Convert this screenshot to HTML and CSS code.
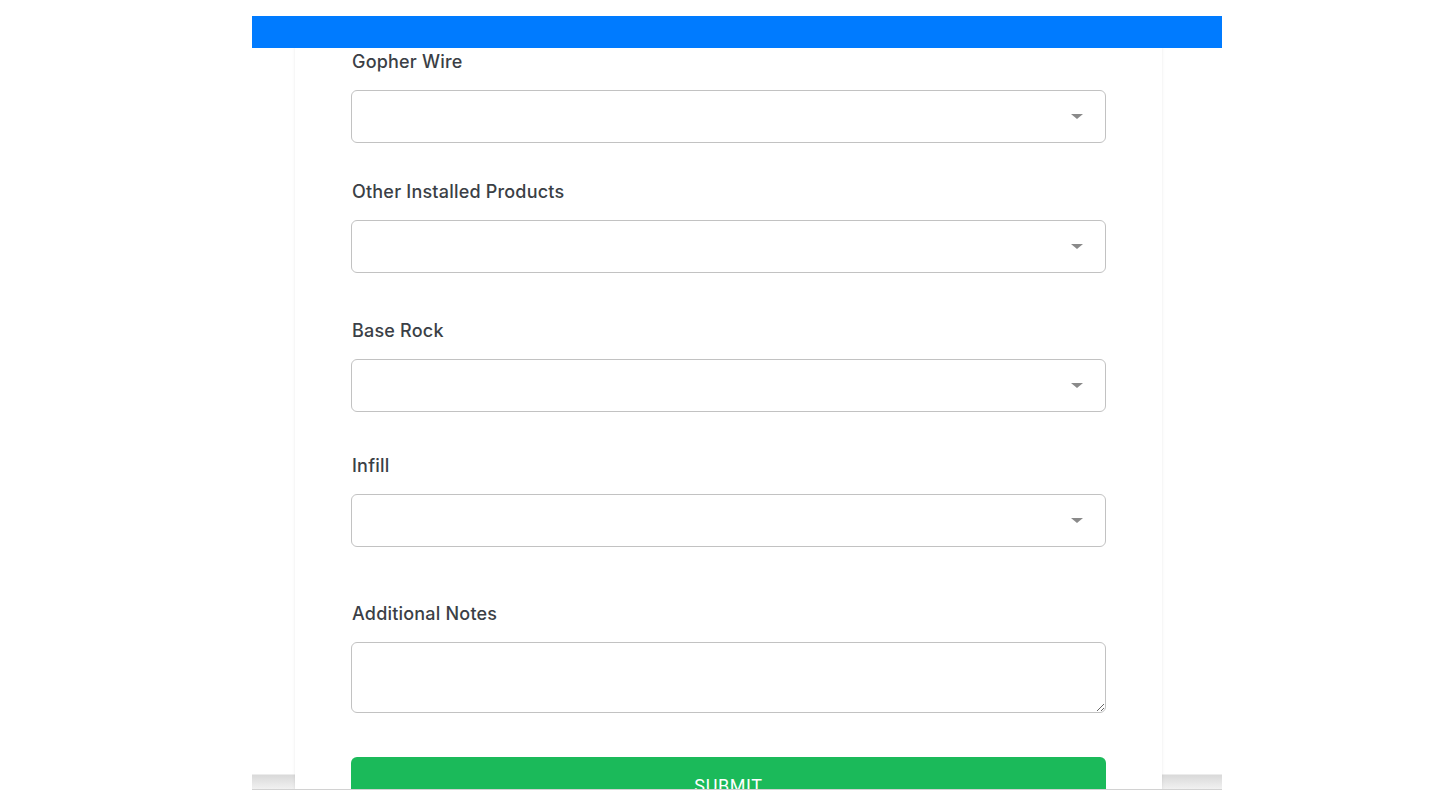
FILE: index.html
```html
<!DOCTYPE html>
<html lang="en">
<head>
<meta charset="utf-8">
<title>Form</title>
<link rel="stylesheet" href="styles.css">
</head>
<body>
<div class="frame">
  <div class="topbar"></div>
  <div class="viewport">
    <form class="card">
      <div class="field field-first">
        <label class="label">Gopher Wire</label>
        <div class="select"><span class="caret"></span></div>
      </div>
      <div class="field field-2">
        <label class="label">Other Installed Products</label>
        <div class="select"><span class="caret"></span></div>
      </div>
      <div class="field field-3">
        <label class="label">Base Rock</label>
        <div class="select"><span class="caret"></span></div>
      </div>
      <div class="field field-4">
        <label class="label">Infill</label>
        <div class="select"><span class="caret"></span></div>
      </div>
      <div class="field field-5">
        <label class="label">Additional Notes</label>
        <textarea class="notes"></textarea>
      </div>
      <button type="button" class="submit">SUBMIT</button>
    </form>
  </div>
</div>
</body>
</html>
```

FILE: styles.css
```css
html, body {
  margin: 0;
  padding: 0;
  background: #ffffff;
}

.frame {
  margin: 16px 0 0 252px;
  width: 970px;
  height: 774px;
  box-sizing: border-box;
  display: flex;
  flex-direction: column;
  overflow: hidden;
  border-bottom: 1px solid #d2d2d2;
  background: linear-gradient(to bottom, #ffffff 0, #ffffff 758px, #d9d9d9 759px, #f1f1f1 773px);
}

.topbar {
  flex: none;
  height: 32px;
  background: #007bff;
  position: relative;
  z-index: 2;
}

.viewport {
  flex: 1;
  overflow: hidden;
  padding-left: 43px;
}

.card {
  width: 867px;
  box-sizing: border-box;
  background: #ffffff;
  box-shadow: 0 0 3px rgba(0, 0, 0, 0.09);
  padding: 2px 56px 40px;
  display: flex;
  flex-direction: column;
  min-height: 900px;
}

.field {
  display: flex;
  flex-direction: column;
}

.field-2 { margin-top: 37px; }
.field-3 { margin-top: 46px; }
.field-4 { margin-top: 42px; }
.field-5 { margin-top: 55px; }

.label {
  font-family: Inter, "Liberation Sans", sans-serif;
  font-size: 18px;
  font-weight: 500;
  letter-spacing: 0.2px;
  line-height: 24px;
  color: #3b3f46;
  margin-bottom: 16px;
  padding-left: 1px;
}

.select {
  height: 53px;
  box-sizing: border-box;
  border: 1px solid #c2c2c2;
  border-radius: 6px;
  background: #ffffff;
  display: flex;
  align-items: center;
  justify-content: flex-end;
  padding-right: 22px;
}

.caret {
  width: 0;
  height: 0;
  border-left: 6px solid transparent;
  border-right: 6px solid transparent;
  border-top: 5px solid #8a8a8a;
}

.notes {
  display: block;
  height: 71px;
  box-sizing: border-box;
  border: 1px solid #c2c2c2;
  border-radius: 6px;
  background: #ffffff;
  margin: 0;
  resize: vertical;
  font-family: Inter, "Liberation Sans", sans-serif;
}

.submit {
  margin-top: 44px;
  height: 56px;
  border: none;
  border-radius: 6px;
  background: #1bba5a;
  color: #ffffff;
  font-family: Roboto, "Liberation Sans", sans-serif;
  font-size: 18px;
  font-weight: 400;
  letter-spacing: 0.6px;
  padding: 0;
}
```
